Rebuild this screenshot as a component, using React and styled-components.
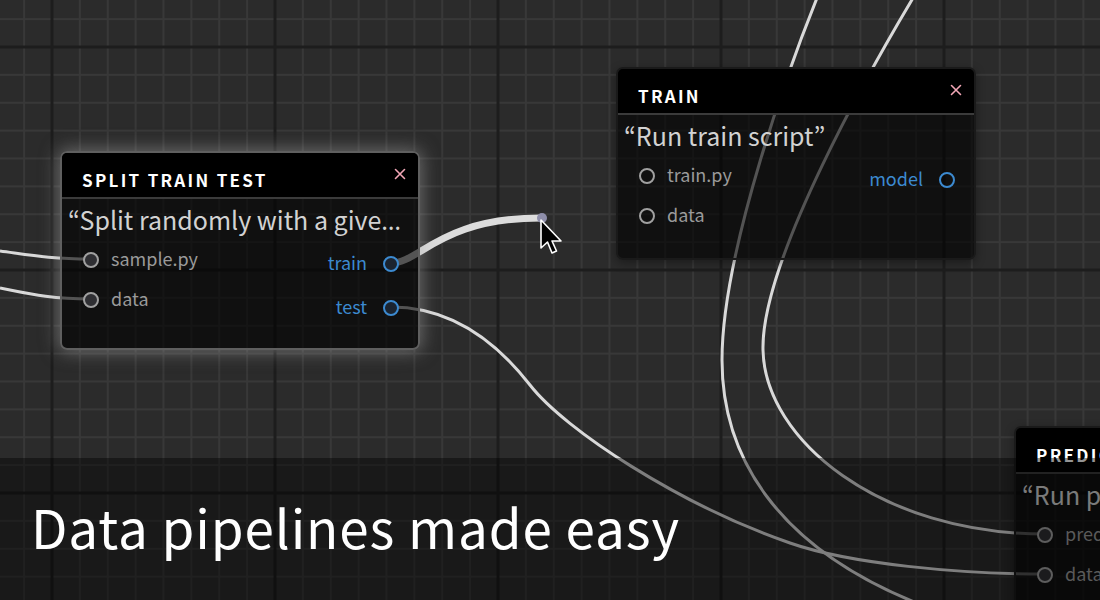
import React from 'react';
import styled, { createGlobalStyle } from 'styled-components';

const GlobalStyle = createGlobalStyle`
  html, body { margin: 0; padding: 0; background: #2a2a2a; }
  body { font-family: "Noto Sans CJK JP", "Noto Sans", sans-serif; overflow: hidden; }
  * { box-sizing: border-box; }
`;

const Canvas = styled.div`
  position: relative;
  width: 1100px;
  height: 600px;
  overflow: hidden;
  background-color: #2b2b2b;
  background-image:
    linear-gradient(to right, #1d1d1d 3px, transparent 3px),
    linear-gradient(to bottom, #1d1d1d 3px, transparent 3px),
    linear-gradient(to right, #383838 2px, transparent 2px),
    linear-gradient(to bottom, #383838 2px, transparent 2px);
  background-size: 223px 223px, 223px 223px, 27.875px 27.875px, 27.875px 27.875px;
  background-position: 50.5px 0, 0 45.5px, 51px 0, 0 46px;
`;

const WireLayer = styled.svg`
  position: absolute;
  left: 0;
  top: 0;
  width: 1100px;
  height: 600px;
`;

const Node = styled.div`
  position: absolute;
  left: ${(p) => p.$x}px;
  top: ${(p) => p.$y}px;
  width: 360px;
  display: flex;
  flex-direction: column;
  border: 2px solid ${(p) => (p.$selected ? '#5f5f5f' : '#1a1a1a')};
  border-radius: 7px;
  overflow: hidden;
  background: rgba(0, 0, 0, 0.62);
  box-shadow: ${(p) =>
    p.$selected ? '0 0 18px 2px rgba(170, 170, 170, 0.5)' : '0 3px 10px rgba(0, 0, 0, 0.35)'};
`;

const Header = styled.div`
  height: 46px;
  display: flex;
  align-items: flex-start;
  justify-content: space-between;
  padding: 15px 12px 0 20px;
  background: #000;
  border-bottom: 2px solid #3b3b3b;
`;

const Title = styled.h3`
  margin: 1px 0 0;
  font-size: 17px;
  line-height: 22px;
  font-weight: 700;
  letter-spacing: 2.3px;
  color: #fff;
  white-space: nowrap;
`;

const Close = styled.button`
  width: 12px;
  height: 12px;
  padding: 0;
  border: 0;
  background: none;
  display: flex;
  flex-shrink: 0;
`;

/* the ellipsis glyph comes from the block's own font: use a Latin font with a baseline "…" */
const Description = styled.p`
  margin: 4px 0 0;
  padding: 0 8px 0 6px;
  font-family: "Noto Sans", sans-serif;
  font-size: 25px;
  line-height: 32px;
  color: #d2d2d2;
  white-space: nowrap;
  overflow: hidden;
  text-overflow: ellipsis;
`;

const DescriptionText = styled.span`
  font-family: "Noto Sans CJK JP", "Noto Sans", sans-serif;
`;

const Body = styled.div`
  display: flex;
  justify-content: space-between;
  min-height: 106px;
  padding-bottom: 18px;
`;

const Inputs = styled.div`
  display: flex;
  flex-direction: column;
  padding: 4px 0 0 21px;
`;

const Outputs = styled.div`
  display: flex;
  flex-direction: column;
  align-items: flex-end;
  padding: 5.5px 19px 0 0;
`;

const PortRow = styled.div`
  display: flex;
  align-items: center;
  gap: ${(p) => (p.$out ? 16 : 12)}px;
  height: ${(p) => (p.$out ? 44 : 40)}px;
  font-size: 18px;
  white-space: nowrap;
  color: ${(p) => (p.$out ? '#3c8ad0' : '#9a9a9a')};
`;

const PortLabel = styled.span`
  line-height: 22px;
  margin-top: -4px;
`;

const Port = styled.span`
  width: 16px;
  height: 16px;
  flex-shrink: 0;
  border-radius: 50%;
  border: 2.5px solid ${(p) => (p.$out ? '#3c8ad0' : '#a0a0a0')};
  background: ${(p) => (p.$connected ? (p.$out ? '#1b2430' : '#2f2f33') : 'transparent')};
`;

const Cursor = styled.svg`
  position: absolute;
  left: 540px;
  top: 219px;
  width: 26px;
  height: 38px;
  overflow: visible;
`;

const Banner = styled.div`
  position: absolute;
  left: 0;
  right: 0;
  bottom: 0;
  height: 142px;
  display: flex;
  align-items: flex-start;
  padding: 36px 0 0 31px;
  background: rgba(0, 0, 0, 0.42);
`;

const Tagline = styled.h1`
  margin: 0;
  font-size: 53px;
  line-height: 64px;
  font-weight: 400;
  letter-spacing: 0.9px;
  color: #fff;
  white-space: nowrap;
`;

const CloseIcon = () => (
  <svg width="12" height="12" viewBox="0 0 12 12">
    <path d="M1.5 1.5 L10.5 10.5 M10.5 1.5 L1.5 10.5" stroke="#f2a6b6" strokeWidth="1.6" strokeLinecap="round" />
  </svg>
);

const nodes = [
  {
    id: 'split',
    x: 60,
    y: 151,
    selected: true,
    title: 'SPLIT TRAIN TEST',
    description: '“Split randomly with a given ratio”',
    inputs: [
      { name: 'sample.py', connected: true },
      { name: 'data', connected: true },
    ],
    outputs: [
      { name: 'train', connected: true },
      { name: 'test', connected: true },
    ],
  },
  {
    id: 'train',
    x: 616,
    y: 67,
    title: 'TRAIN',
    description: '“Run train script”',
    inputs: [
      { name: 'train.py', connected: false },
      { name: 'data', connected: false },
    ],
    outputs: [{ name: 'model', connected: false }],
  },
  {
    id: 'predict',
    x: 1014,
    y: 426,
    title: 'PREDICT',
    description: '“Run predict script”',
    inputs: [
      { name: 'predict.py', connected: true },
      { name: 'data', connected: true },
    ],
    outputs: [{ name: 'predictions', connected: false }],
  },
];

const wires = [
  { d: 'M0,251 C30,255 50,259 91,259' },
  { d: 'M0,288 C30,294 50,299 91,299' },
  { d: 'M391,307 C450,307 495,340 530,385 C565,430 680,505 790,543 C850,564 960,574 1045,574' },
  { d: 'M817,-2 C792,60 722,250 722,360 C722,450 770,550 935,610' },
  { d: 'M913,-2 C873,65 761,260 763,350 C765,440 880,534 1045,534' },
];

export default function App() {
  return (
    <>
      <GlobalStyle />
      <Canvas>
        <WireLayer viewBox="0 0 1100 600">
          {wires.map((w, i) => (
            <path key={i} d={w.d} fill="none" stroke="#d9d9d9" strokeWidth="3" />
          ))}
          <path d="M391,263 C420,263 440,218 541,218" fill="none" stroke="#dcdcdc" strokeWidth="7" strokeLinecap="round" />
          <circle cx="542" cy="218" r="5" fill="#8e8eaa" />
        </WireLayer>

        {nodes.map((n) => (
          <Node key={n.id} $x={n.x} $y={n.y} $selected={n.selected}>
            <Header>
              <Title>{n.title}</Title>
              <Close aria-label="Remove node">
                <CloseIcon />
              </Close>
            </Header>
            <Description>
              <DescriptionText>{n.description}</DescriptionText>
            </Description>
            <Body>
              <Inputs>
                {n.inputs.map((p) => (
                  <PortRow key={p.name}>
                    <Port $connected={p.connected} />
                    <PortLabel>{p.name}</PortLabel>
                  </PortRow>
                ))}
              </Inputs>
              <Outputs>
                {n.outputs.map((p) => (
                  <PortRow key={p.name} $out>
                    <PortLabel>{p.name}</PortLabel>
                    <Port $out $connected={p.connected} />
                  </PortRow>
                ))}
              </Outputs>
            </Body>
          </Node>
        ))}

        <Cursor viewBox="0 0 26 38">
          <path
            d="M1 1 L1 29 L7.5 23 L12 34 L16.5 32 L12 22 L21 22 Z"
            fill="#000"
            stroke="#fff"
            strokeWidth="1.6"
            strokeLinejoin="round"
          />
        </Cursor>

        <Banner>
          <Tagline>Data pipelines made easy</Tagline>
        </Banner>
      </Canvas>
    </>
  );
}
